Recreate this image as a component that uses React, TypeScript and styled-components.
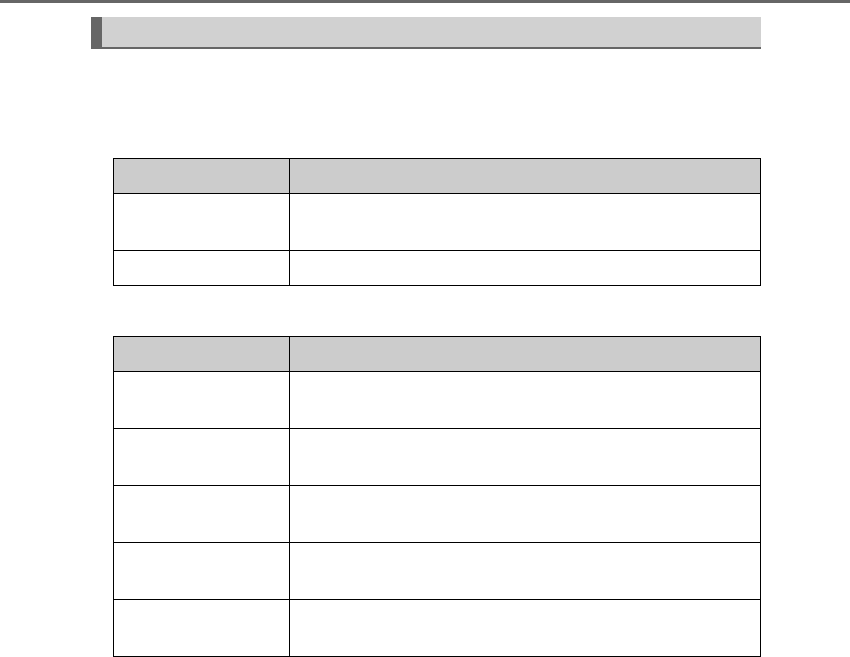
import styled, { createGlobalStyle } from 'styled-components';

const GlobalStyle = createGlobalStyle`
    html, body {
        margin: 0;
        padding: 0;
        background: #ffffff;
        font-family: "Liberation Sans", Arial, sans-serif;
    }
`;

const tables = [
    { rows: [57, 35] },
    { rows: [57, 57, 57, 57, 57] },
];

const App = () => {
    return (<>
        <GlobalStyle />
        <TopBar />
        <Page>
            <SectionHeader />
            <Content>
                {tables.map((table, tIdx) => (
                    <Table key={tIdx} $first={tIdx === 0}>
                        <colgroup>
                            <col style={{ width: 176 }} />
                            <col />
                        </colgroup>
                        <thead>
                            <Row $height={35}>
                                <Head>&nbsp;</Head>
                                <Head>&nbsp;</Head>
                            </Row>
                        </thead>
                        <tbody>
                            {table.rows.map((h, idx) => (
                                <Row key={idx} $height={h}>
                                    <Cell>&nbsp;</Cell>
                                    <Cell>&nbsp;</Cell>
                                </Row>
                            ))}
                        </tbody>
                    </Table>
                ))}
            </Content>
        </Page>
    </>)
}

const TopBar = styled.div`
    width: 100%;
    height: 3px;
    background: #666666;
`;

const Page = styled.div`
    display: flex;
    flex-direction: column;
    padding: 14px 0 0 91px;
    width: 670px;
`;

const SectionHeader = styled.div`
    height: 30px;
    background: #d1d1d1;
    border-left: 11px solid #666666;
    border-bottom: 2px solid #666666;
`;

const Content = styled.div`
    display: flex;
    flex-direction: column;
    padding-left: 22px;
`;

const Table = styled.table<{ $first: boolean }>`
    width: 648px;
    border-collapse: collapse;
    table-layout: fixed;
    margin-top: ${p => p.$first ? '109px' : '50px'};
    border: 1px solid #000000;
`;

const Row = styled.tr<{ $height: number }>`
    height: ${p => p.$height}px;
`;

const Head = styled.th`
    background: #cccccc;
    border: 1px solid #000000;
    padding: 0;
    font-size: 13px;
`;

const Cell = styled.td`
    border: 1px solid #000000;
    padding: 0;
    font-size: 13px;
`;

export default App;
